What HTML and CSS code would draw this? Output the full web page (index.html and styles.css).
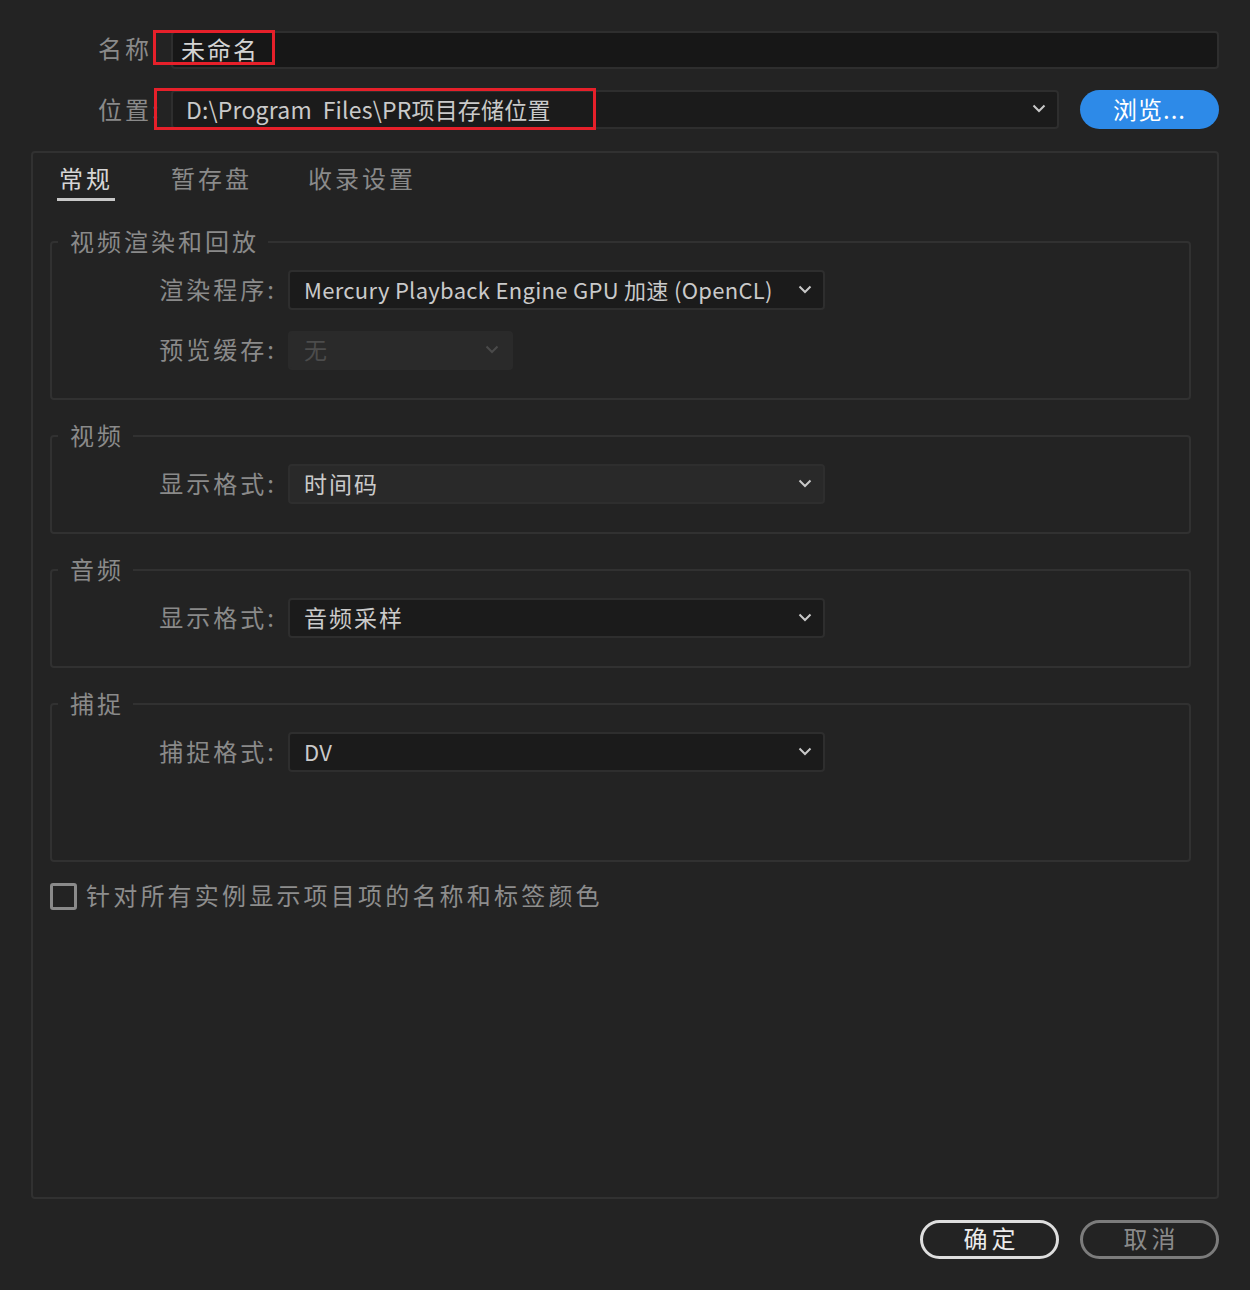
FILE: index.html
```html
<!DOCTYPE html>
<html lang="zh-CN">
<head>
<meta charset="utf-8">
<title>新建项目</title>
<link rel="stylesheet" href="styles.css">
</head>
<body>
<div class="dialog">
  <div class="top-row name-row">
    <span class="top-label">名称</span>
    <div class="text-input">未命名</div>
  </div>
  <div class="top-row loc-row">
    <span class="top-label">位置:</span>
    <div class="select loc-select">
      <span class="val">D:\Program&nbsp; Files\PR项目存储位置</span>
      <svg class="chev" width="14" height="9" viewBox="0 0 14 9"><polyline points="1.5,1.5 7,7 12.5,1.5" fill="none" stroke="#c8c8c8" stroke-width="2"/></svg>
    </div>
    <button class="btn-primary">浏览...</button>
  </div>

  <div class="panel">
    <div class="tabs">
      <span class="tab active">常规</span>
      <span class="tab">暂存盘</span>
      <span class="tab">收录设置</span>
    </div>

    <fieldset class="group g-render">
      <legend>视频渲染和回放</legend>
      <div class="frow">
        <span class="flabel">渲染程序:</span>
        <div class="select wide">
          <span class="val latin">Mercury Playback Engine GPU 加速 (OpenCL)</span>
          <svg class="chev" width="14" height="9" viewBox="0 0 14 9"><polyline points="1.5,1.5 7,7 12.5,1.5" fill="none" stroke="#c8c8c8" stroke-width="2"/></svg>
        </div>
      </div>
      <div class="frow">
        <span class="flabel">预览缓存:</span>
        <div class="select disabled">
          <span class="val">无</span>
          <svg class="chev" width="14" height="9" viewBox="0 0 14 9"><polyline points="1.5,1.5 7,7 12.5,1.5" fill="none" stroke="#4a4a4a" stroke-width="2"/></svg>
        </div>
      </div>
    </fieldset>

    <fieldset class="group">
      <legend>视频</legend>
      <div class="frow">
        <span class="flabel">显示格式:</span>
        <div class="select wide light">
          <span class="val">时间码</span>
          <svg class="chev" width="14" height="9" viewBox="0 0 14 9"><polyline points="1.5,1.5 7,7 12.5,1.5" fill="none" stroke="#c8c8c8" stroke-width="2"/></svg>
        </div>
      </div>
    </fieldset>

    <fieldset class="group">
      <legend>音频</legend>
      <div class="frow">
        <span class="flabel">显示格式:</span>
        <div class="select wide">
          <span class="val">音频采样</span>
          <svg class="chev" width="14" height="9" viewBox="0 0 14 9"><polyline points="1.5,1.5 7,7 12.5,1.5" fill="none" stroke="#c8c8c8" stroke-width="2"/></svg>
        </div>
      </div>
    </fieldset>

    <fieldset class="group g-capture">
      <legend>捕捉</legend>
      <div class="frow">
        <span class="flabel">捕捉格式:</span>
        <div class="select wide">
          <span class="val latin">DV</span>
          <svg class="chev" width="14" height="9" viewBox="0 0 14 9"><polyline points="1.5,1.5 7,7 12.5,1.5" fill="none" stroke="#c8c8c8" stroke-width="2"/></svg>
        </div>
      </div>
    </fieldset>

    <label class="check">
      <span class="box"></span>
      <span class="check-text">针对所有实例显示项目项的名称和标签颜色</span>
    </label>
  </div>

  <div class="footer">
    <button class="btn-outline ok">确定</button>
    <button class="btn-outline cancel">取消</button>
  </div>

  <div class="mark mark-name"></div>
  <div class="mark mark-loc"></div>
</div>
</body>
</html>
```

FILE: styles.css
```css
* { box-sizing: border-box; }

body {
  margin: 0;
  background: #232323;
  font-family: "Noto Sans CJK SC", "Noto Sans", sans-serif;
}

.dialog {
  position: relative;
  width: 1250px;
  height: 1290px;
  padding: 31px 31px 0 31px;
}

.top-row {
  display: flex;
  align-items: center;
}

.name-row { height: 38px; }
.loc-row { height: 39px; margin-top: 21px; }

.top-label {
  width: 140px;
  flex: none;
  padding-left: 67px;
  font-size: 24px;
  line-height: 30px;
  letter-spacing: 3px;
  color: #8a8a8a;
  white-space: nowrap;
}

.name-row .top-label { padding-bottom: 5px; }
.loc-row .top-label { padding-bottom: 2px; }

.text-input {
  flex: 1;
  height: 38px;
  display: flex;
  align-items: center;
  padding: 0 0 4px 8px;
  border: 2px solid #2e2e2e;
  border-radius: 4px;
  background: #171717;
  color: #d4d4d4;
  font-size: 24px;
  letter-spacing: 2px;
}

.select {
  display: flex;
  align-items: center;
  justify-content: space-between;
  height: 40px;
  padding: 0 11px 2px 14px;
  border: 2px solid #2e2e2e;
  border-radius: 4px;
  background: #1b1b1b;
  color: #cacaca;
  font-size: 23px;
  white-space: nowrap;
}

.select .val { letter-spacing: 2px; }
.select .val.latin { font-size: 22px; letter-spacing: 0.3px; }

.chev { flex: none; }

.loc-select {
  flex: 1;
  height: 39px;
  padding-left: 13px;
  font-size: 23px;
}
.loc-select .val { letter-spacing: 0.2px; }

.btn-primary {
  flex: none;
  width: 139px;
  height: 39px;
  margin-left: 21px;
  border: none;
  border-radius: 20px;
  background: #2d8ae8;
  color: #ffffff;
  font-family: inherit;
  font-size: 24px;
  letter-spacing: 1px;
  padding: 0 0 3px 0;
}

.panel {
  margin-top: 22px;
  height: 1048px;
  border: 2px solid #313131;
  border-radius: 4px;
}

.tabs {
  display: flex;
  padding: 10px 0 0 24px;
}

.tab {
  padding: 0 2px 5px 2px;
  font-size: 24px;
  line-height: 30px;
  letter-spacing: 3px;
  color: #8a8a8a;
  border-bottom: 3px solid transparent;
}

.tab + .tab { margin-left: 54px; }
.tab:nth-child(3) { margin-left: 52px; }

.tab.active {
  color: #d6d6d6;
  border-bottom-color: #c8c8c8;
}

.group {
  margin: 21px 26px 0 17px;
  padding: 13px 0 28px 0;
  border: 2px solid #313131;
  border-radius: 4px;
  min-width: 0;
}

.g-render { margin-top: 26px; }
.g-capture { padding-bottom: 88px; }

.group legend {
  margin-left: 6px;
  padding: 0 9px 2px 12px;
  font-size: 24px;
  line-height: 28px;
  letter-spacing: 3px;
  color: #8a8a8a;
}

.frow {
  display: flex;
  align-items: center;
  height: 40px;
}

.frow + .frow { margin-top: 20px; }

.flabel {
  width: 236px;
  flex: none;
  padding: 0 11px 3px 0;
  text-align: right;
  font-size: 24px;
  letter-spacing: 3px;
  color: #8a8a8a;
  white-space: nowrap;
}

.select.wide { width: 537px; }

.select.light {
  background: #292929;
  border-color: #2e2e2e;
}

.select.disabled {
  width: 225px;
  height: 39px;
  background: #2a2a2a;
  border-color: #2a2a2a;
  color: #4c4c4c;
  padding-right: 12px;
}

.check {
  display: flex;
  align-items: center;
  margin: 18px 0 0 17px;
}

.box {
  width: 27px;
  height: 27px;
  border: 3px solid #8a8a8a;
  border-radius: 3px;
  flex: none;
}

.check-text {
  margin-left: 9px;
  font-size: 24px;
  line-height: 30px;
  padding-bottom: 3px;
  letter-spacing: 3.2px;
  color: #8d8d8d;
}

.footer {
  display: flex;
  justify-content: flex-end;
  gap: 21px;
  margin-top: 21px;
}

.btn-outline {
  width: 139px;
  height: 39px;
  border-radius: 20px;
  background: transparent;
  font-family: inherit;
  font-size: 24px;
  line-height: 30px;
  letter-spacing: 4px;
  padding: 0 0 8px 4px;
}

.btn-outline.ok {
  border: 3px solid #dedede;
  color: #ececec;
}

.btn-outline.cancel {
  border: 3px solid #7c7c7c;
  color: #8a8a8a;
}

.mark {
  position: absolute;
  border: 3px solid #e6202a;
  pointer-events: none;
}

.mark-name {
  left: 153px;
  top: 30px;
  width: 122px;
  height: 35px;
}

.mark-loc {
  left: 154px;
  top: 88px;
  width: 442px;
  height: 42px;
}
```
